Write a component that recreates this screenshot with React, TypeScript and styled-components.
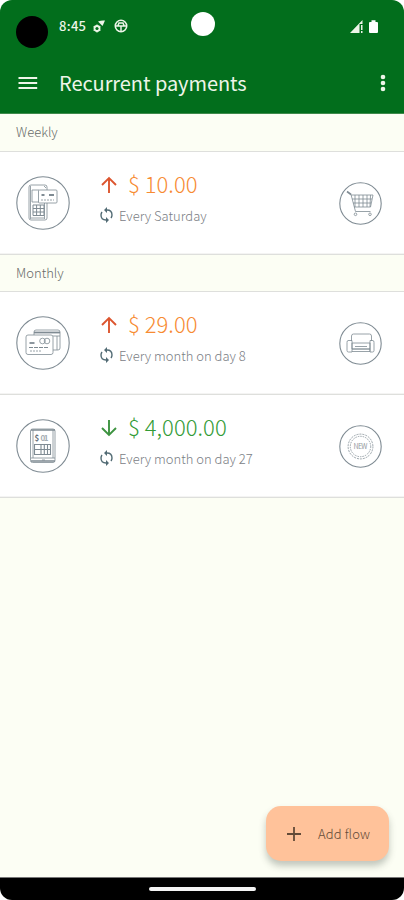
import React from "react";
import styled, { createGlobalStyle } from "styled-components";

const GlobalStyle = createGlobalStyle`
  * { box-sizing: border-box; }
  body { margin: 0; background: #fff; }
`;

const Screen = styled.div`
  width: 404px;
  height: 900px;
  display: flex;
  flex-direction: column;
  position: relative;
  overflow: hidden;
  border-radius: 12px;
  background: #fcfef4;
  font-family: "Noto Sans CJK SC", "Noto Sans", sans-serif;
  font-weight: 300;
`;

const Header = styled.header`
  height: 114px;
  flex: none;
  background: #026e1c;
  color: #eef5e9;
  border-bottom: 1px solid #3f8a4b;
`;

const StatusBar = styled.div`
  height: 52px;
  display: flex;
  align-items: center;
  padding-left: 16px;
`;

const Bubble = styled.span<{ $size: number; $color: string; $left: number; $shift: number }>`
  width: ${p => p.$size}px;
  height: ${p => p.$size}px;
  border-radius: 50%;
  background: ${p => p.$color};
  margin-left: ${p => p.$left}px;
  margin-top: ${p => p.$shift}px;
`;

const Clock = styled.span`
  width: 28px;
  margin-left: 11px;
  font: 500 13px/20px "Noto Sans CJK SC", sans-serif;
  letter-spacing: 0.3px;
  white-space: nowrap;
`;

const Glyph = styled.svg<{ $left?: number }>`
  display: block;
  flex: none;
  margin-left: ${p => p.$left ?? 0}px;
`;

const Toolbar = styled.div`
  height: 61px;
  display: flex;
  align-items: center;
  padding: 1px 11px 0 18px;
`;

const Title = styled.h1`
  flex: 1;
  margin: 0 0 0 21px;
  font-size: 20px;
  line-height: 30px;
  font-weight: 400;
  letter-spacing: -0.06px;
  white-space: nowrap;
`;

const SectionTitle = styled.h2<{ $height: number }>`
  height: ${p => p.$height}px;
  flex: none;
  margin: 0;
  padding-left: 16px;
  border-bottom: 1px solid #dedfdc;
  color: #686b69;
  font-size: 13px;
  line-height: 36px;
  font-weight: 300;
`;

const Row = styled.article`
  height: 103px;
  flex: none;
  display: flex;
  align-items: center;
  padding: 0 22px 0 16px;
  background: #fff;
  border-bottom: 1px solid #dedfdc;
  box-shadow: inset 0 -1px 0 #f4f4f3;
`;

const Details = styled.div`
  flex: 1;
  height: 100%;
  padding: 16px 0 0 30px;
`;

const AmountLine = styled.div<{ $income?: boolean }>`
  height: 30px;
  display: flex;
  align-items: center;
  color: ${p => (p.$income ? "#329b36" : "#f78b32")};
  font-size: 22px;
  line-height: 30px;
  letter-spacing: 0.05px;
  white-space: nowrap;
`;

const Arrow = styled.svg`
  display: block;
  flex: none;
  margin-top: 3px;
`;

const Amount = styled.span`
  margin-left: 10px;
`;

const Schedule = styled.div`
  height: 30px;
  display: flex;
  align-items: center;
  margin-top: 2px;
  color: #7b8085;
  font-size: 13px;
  white-space: nowrap;
`;

const ScheduleText = styled.span`
  margin-left: 6px;
`;

const Content = styled.main`
  flex: 1;
  display: flex;
  flex-direction: column;
`;

const AddButton = styled.button`
  position: absolute;
  right: 15px;
  bottom: 39px;
  width: 123px;
  height: 55px;
  display: flex;
  align-items: center;
  padding: 0 0 0 21px;
  border: 0;
  border-radius: 15px;
  background: #ffc29a;
  box-shadow: 0 5px 7px rgba(60, 70, 60, 0.3);
  color: #634a37;
  font: 300 13px/20px "Noto Sans CJK SC", sans-serif;
  letter-spacing: 0.1px;
  white-space: nowrap;
`;

const AddLabel = styled.span`
  margin-left: 17px;
`;

const NavBar = styled.footer`
  height: 23px;
  flex: none;
  display: flex;
  align-items: center;
  justify-content: center;
  background: #000;
  border-top: 1px solid #777;
`;

const Handle = styled.span`
  width: 107px;
  height: 4px;
  border-radius: 2px;
  background: #f4f4f4;
`;

const Line = styled.g`
  fill: none;
  stroke: #7f8b93;
  stroke-width: 0.8;
`;

type Art = "terminal" | "cards" | "tablet" | "cart" | "chair" | "new";

const NewText = styled.text`
  font: 400 7px "Noto Sans CJK SC", sans-serif;
  fill: #959ba1;
  stroke: none;
`;

const DisplayText = styled.text<{ $faint?: boolean }>`
  font: 700 8px "Noto Sans CJK SC", sans-serif;
  fill: ${p => (p.$faint ? "#a5adb3" : "#66727b")};
  stroke: none;
`;

function Drawing({ art }: { art: Art }) {
  switch (art) {
    case "terminal":
      return (
        <>
          <path d="M31 14v-3q0-2-2-2H15q-2 0-2 2v31q0 2 2 2h14q2 0 2-2V27M14.5 10v33M28.5 27v16M28 10l2 2" />
          <path d="M23 14h-7v12h7" />
          <rect x="22.5" y="14" width="18.5" height="13" rx="1" fill="#fff" />
          <path strokeWidth="2" d="M25.5 19h3M33 19h5" />
          <path strokeDasharray="2 1" d="M25 24h13" />
          <path strokeWidth="1" d="M17 29h11v10.5H17zM20.6 29v10.5M24.3 29v10.5M17 32.5h11M17 36h11" />
          <path d="M15 42h13" />
        </>
      );
    case "cards":
      return (
        <>
          <path d="M18 19v-3q0-2 2-2h22q2 0 2 2v16q0 2-2 2h-5M37 20h7M41 20v14" />
          <path strokeWidth="1.8" d="M18 16.5h26" />
          <rect x="10" y="19" width="27" height="19.5" rx="2" fill="#fff" />
          <circle cx="26.5" cy="25" r="2.8" /><circle cx="31" cy="25" r="2.8" />
          <path strokeWidth="1.8" d="M13.5 27h5" />
          <path strokeWidth="1.1" strokeDasharray="4 1" d="M13 31.5h20" />
          <path strokeDasharray="2 1" d="M14 35h12" />
        </>
      );
    case "tablet":
      return (
        <>
          <rect x="14.5" y="10" width="24.5" height="33.5" rx="2" />
          <path strokeWidth="1.4" d="M15 11h24M15 42h24" />
          <path d="M15 39h24M17 11v28M37 11v28M26 41h3" />
          <DisplayText x="18.5" y="22">$</DisplayText>
          <DisplayText $faint x="24.5" y="22" textLength="8">01</DisplayText>
          <path strokeWidth="1.1" d="M18.5 25.5h16v10h-16zM25 25.5v10M28.3 25.5v10M31.5 25.5v10M18.5 30.5h16" />
        </>
      );
    case "cart":
      return (
        <>
          <path strokeWidth="1.6" d="M8 9.5l4 3" />
          <path d="M12 12.5l4.5 17h15M12 13h22l-2.5 12H15M16 13v12M20 13v12M24 13v12M28 13v12M31.5 13l-.5 12M13 17h20M14 21h18" />
          <circle cx="16.5" cy="32.3" r="1.3" /><circle cx="31" cy="32.3" r="1.3" />
        </>
      );
    case "chair":
      return (
        <>
          <path d="M12.5 19v-5q0-2 2-2h16q2 0 2 2v5M13 21h18v6H13zM16 24.5h12" />
          <path d="M13 18.5H9q-1 0-1 2v8q0 1.5 1.5 1.5H13zM31 18.5h3q1 0 1 2v8q0 1.5-1.5 1.5H31zM13 27h18v2.5H13" />
        </>
      );
    default:
      return (
        <>
          <circle cx="21.5" cy="21.5" r="12.4" strokeDasharray="2 1" />
          <circle cx="21.5" cy="21.5" r="10.2" strokeDasharray="1.5 1" />
          <NewText x="14.5" y="24" textLength="14">NEW</NewText>
        </>
      );
  }
}

function Badge({ art, size }: { art: Art; size: number }) {
  return (
    <Glyph width={size} height={size} viewBox={`0 0 ${size} ${size}`}>
      <Line>
        <circle cx={size / 2} cy={size / 2} r={size / 2 - 0.8} strokeWidth="1.1" />
        <Drawing art={art} />
      </Line>
    </Glyph>
  );
}

function FlowRow({ amount, schedule, income, left, right }: {
  amount: string; schedule: string; income?: boolean; left: Art; right: Art;
}) {
  return (
    <Row>
      <Badge art={left} size={54} />
      <Details>
        <AmountLine $income={income}>
          <Arrow width="18" height="18" viewBox="0 0 18 18">
            <path
              d={income ? "M9 1v14.5M2 9l7 7 7-7" : "M9 17V2.5M2 9l7-7 7 7"}
              fill="none" stroke={income ? "#3d9340" : "#dc552f"} strokeWidth="1.9"
            />
          </Arrow>
          <Amount>{amount}</Amount>
        </AmountLine>
        <Schedule>
          <Glyph width="13" height="16" viewBox="0 0 13 16">
            <path d="M7 3Q12 3 12 8q0 1.5-1 3M6 13Q1 13 1 8q0-1.5 1-3" fill="none" stroke="#526b74" strokeWidth="1.4" />
            <path d="M7 0v6L4 3zM6 10v6l3-3z" fill="#526b74" />
          </Glyph>
          <ScheduleText>{schedule}</ScheduleText>
        </Schedule>
      </Details>
      <Badge art={right} size={43} />
    </Row>
  );
}

export default function App() {
  return (
    <>
      <GlobalStyle />
      <Screen>
        <Header>
          <StatusBar>
            <Bubble $size={32} $color="#000" $left={0} $shift={11} />
            <Clock>8:45</Clock>
            <Glyph $left={6} width="12" height="13" viewBox="0 0 12 13">
              <circle cx="4" cy="8.5" r="2.5" fill="none" stroke="currentColor" strokeWidth="1.9" />
              <path d="M4 4.6v7.8M.6 6.5l6.8 4M.6 10.5l6.8-4" stroke="currentColor" strokeWidth="1.2" />
              <circle cx="4" cy="8.5" r="1.5" fill="#026e1c" />
              <path d="M5 1.5Q9 0 12 .6L9.5 6z" fill="currentColor" />
            </Glyph>
            <Glyph $left={9} width="14" height="14" viewBox="0 0 14 14">
              <circle cx="7" cy="7" r="5.7" fill="none" stroke="currentColor" strokeWidth="1.6" />
              <path d="M1.5 7h11M7 7v5.5M4 6.5 5 4h4l1 2.5" fill="none" stroke="currentColor" strokeWidth="1.5" />
            </Glyph>
            <Bubble $size={24} $color="#fff" $left={63} $shift={-4} />
            <Glyph $left={135} width="14" height="13" viewBox="0 0 14 13">
              <path d="M0 13 12.5 0v4H9.5v9zM11 5h1.5v5H11zM11 11h1.5v2H11z" fill="currentColor" />
            </Glyph>
            <Glyph $left={5} width="9" height="13" viewBox="0 0 9 13">
              <path d="M1 2h1.5V.2h4V2H8q1 0 1 1v9q0 1-1 1H1q-1 0-1-1V3q0-1 1-1" fill="#fff" />
            </Glyph>
          </StatusBar>
          <Toolbar>
            <Glyph width="20" height="15" viewBox="0 0 20 15">
              <path d="M.5 2h18.7M.5 7h18.7M.5 12h18.7" stroke="currentColor" strokeWidth="2" />
            </Glyph>
            <Title>Recurrent payments</Title>
            <Glyph width="20" height="20" viewBox="0 0 20 20">
              <g fill="currentColor"><circle cx="10" cy="4" r="2.3" /><circle cx="10" cy="10" r="2.3" /><circle cx="10" cy="16" r="2.3" /></g>
            </Glyph>
          </Toolbar>
        </Header>
        <Content>
          <SectionTitle $height={38}>Weekly</SectionTitle>
          <FlowRow amount="$ 10.00" schedule="Every Saturday" left="terminal" right="cart" />
          <SectionTitle $height={37}>Monthly</SectionTitle>
          <FlowRow amount="$ 29.00" schedule="Every month on day 8" left="cards" right="chair" />
          <FlowRow amount="$ 4,000.00" schedule="Every month on day 27" income left="tablet" right="new" />
        </Content>
        <NavBar><Handle /></NavBar>
        <AddButton>
          <Glyph width="14" height="14" viewBox="0 0 14 14">
            <path d="M0 7h14M7 0v14" stroke="currentColor" strokeWidth="1.8" />
          </Glyph>
          <AddLabel>Add flow</AddLabel>
        </AddButton>
      </Screen>
    </>
  );
}
